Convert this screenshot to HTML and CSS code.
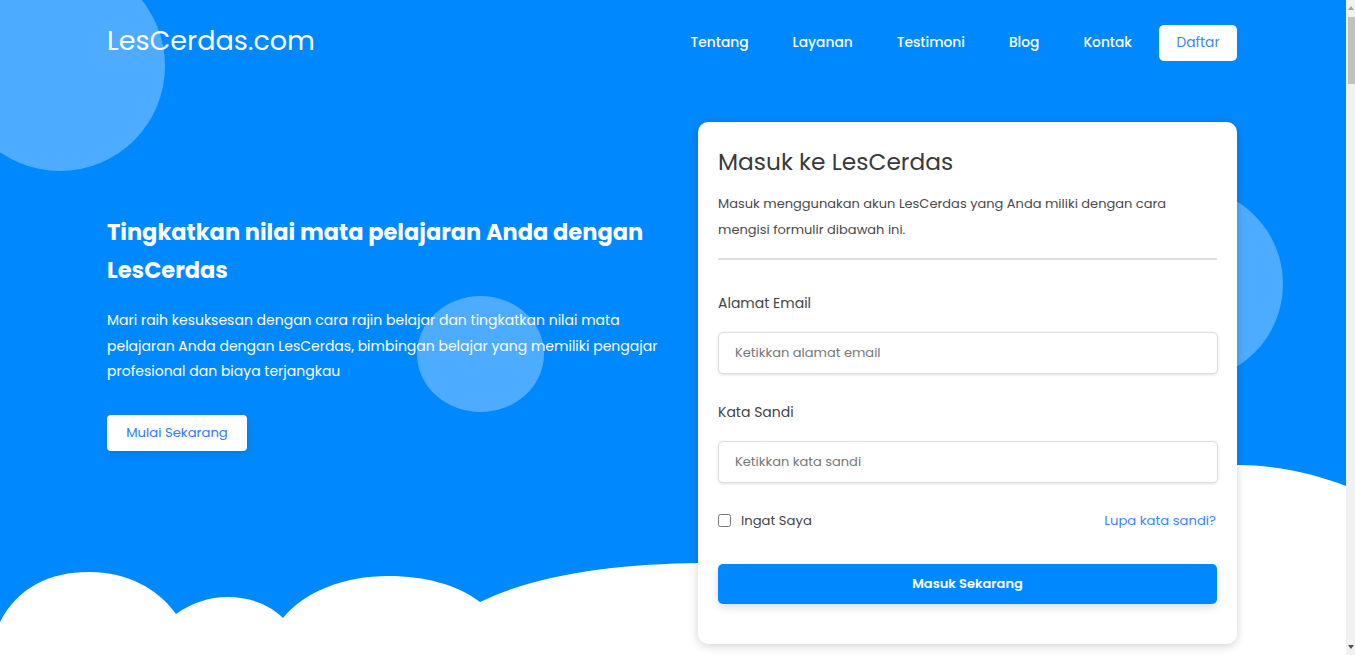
FILE: index.html
```html
<!DOCTYPE html>
<html lang="id">
<head>
<meta charset="utf-8">
<title>LesCerdas.com</title>
<link rel="stylesheet" href="styles.css">
</head>
<body>
<section class="hero">
  <span class="bubble bubble-tl"></span>
  <span class="bubble bubble-mid"></span>
  <span class="bubble bubble-r"></span>
  <svg class="clouds" viewBox="0 0 1346 200" preserveAspectRatio="none" aria-hidden="true">
    <path d="M0,167 C18,132 50,117 89,117 C128,117 158,134 176,159 C192,148 208,142 228,142 C250,142 270,150 283,163 C305,136 345,121 388,121 C425,121 458,130 480,147 C540,118 620,109 700,108 C900,60 1100,12 1237,10 C1280,10 1318,20 1346,31 L1346,200 L0,200 Z" fill="#ffffff"/>
  </svg>
  <div class="container">
    <header class="nav">
      <a class="logo" href="#">LesCerdas.com</a>
      <nav class="menu">
        <a href="#tentang">Tentang</a>
        <a href="#layanan">Layanan</a>
        <a href="#testimoni">Testimoni</a>
        <a href="#blog">Blog</a>
        <a href="#kontak">Kontak</a>
        <a class="btn-daftar" href="#">Daftar</a>
      </nav>
    </header>
    <div class="hero-grid">
      <div class="hero-text">
        <h1>Tingkatkan nilai mata pelajaran Anda dengan LesCerdas</h1>
        <p>Mari raih kesuksesan dengan cara rajin belajar dan tingkatkan nilai mata pelajaran Anda dengan LesCerdas, bimbingan belajar yang memiliki pengajar profesional dan biaya terjangkau</p>
        <a class="btn-mulai" href="#">Mulai Sekarang</a>
      </div>
      <form class="card">
        <h2>Masuk ke LesCerdas</h2>
        <p class="card-desc">Masuk menggunakan akun LesCerdas yang Anda miliki dengan cara mengisi formulir dibawah ini.</p>
        <hr class="divider">
        <label class="field-label" for="email">Alamat Email</label>
        <input class="field" id="email" type="email" placeholder="Ketikkan alamat email">
        <label class="field-label" for="pass">Kata Sandi</label>
        <input class="field" id="pass" type="password" placeholder="Ketikkan kata sandi">
        <div class="row">
          <label class="remember"><input type="checkbox"> Ingat Saya</label>
          <a class="forgot" href="#">Lupa kata sandi?</a>
        </div>
        <button class="btn-submit" type="button">Masuk Sekarang</button>
      </form>
    </div>
  </div>
</section>
<div class="scrollbar" aria-hidden="true">
  <span class="sb-arrow sb-up"></span>
  <span class="sb-thumb"></span>
  <span class="sb-arrow sb-down"></span>
</div>
</body>
</html>
```
FILE: styles.css
```css
* { box-sizing: border-box; }
body {
  margin: 0;
  padding-right: 9px;
  font-family: "Poppins", Inter, "Noto Sans", sans-serif;
  color: #333;
  background: #fff;
}
a { text-decoration: none; }
.container {
  max-width: 1132px;
  margin: 0 auto;
  padding-right: 2px;
  position: relative;
}
.hero {
  position: relative;
  height: 655px;
  background: #0089ff;
  overflow: hidden;
}
.bubble {
  position: absolute;
  border-radius: 50%;
  background: rgba(255, 255, 255, 0.3);
}
.bubble-tl { left: -45px; top: -39px; width: 210px; height: 210px; }
.bubble-mid { left: 417px; top: 296px; width: 127px; height: 116px; }
.bubble-r { left: 1089px; top: 187px; width: 194px; height: 194px; }
.clouds {
  position: absolute;
  left: 0;
  bottom: 0;
  width: 100%;
  height: 200px;
}
.nav {
  display: flex;
  align-items: center;
  justify-content: space-between;
  padding-top: 25px;
}
.logo {
  color: #fff;
  font-size: 27px;
  font-weight: 400;
  margin-top: -4px;
}
.menu {
  display: flex;
  align-items: center;
}
.menu a {
  color: #fff;
  font-size: 13.8px;
  font-weight: 500;
  padding: 0 22px;
}
.menu a.btn-daftar {
  margin-left: 5px;
  background: #fff;
  color: #3b86f7;
  font-weight: 400;
  height: 36px;
  line-height: 36px;
  width: 78px;
  padding: 0;
  text-align: center;
  border-radius: 5px;
}
.hero-grid {
  display: grid;
  grid-template-columns: 1fr 539px;
  gap: 33px;
  margin-top: 61px;
}
.hero-text { padding-top: 91px; }
.hero-text h1 {
  margin: 0;
  color: #fff;
  font-size: 22.5px;
  font-weight: 700;
  line-height: 38px;
}
.hero-text p {
  margin: 19px 0 0;
  color: #fff;
  font-size: 14px;
  line-height: 25.5px;
}
.btn-mulai {
  display: inline-block;
  margin-top: 30px;
  width: 140px;
  height: 36px;
  line-height: 36px;
  text-align: center;
  background: #fff;
  color: #2e7cf6;
  font-size: 13.2px;
  border-radius: 4px;
  box-shadow: 0 3px 8px rgba(0, 0, 0, 0.12);
}
.card {
  background: #fff;
  border-radius: 10px;
  padding: 24px 20px 40px;
  box-shadow: 0 2px 10px rgba(0, 0, 0, 0.18);
  display: flex;
  flex-direction: column;
  position: relative;
  z-index: 1;
}
.card h2 {
  margin: 0;
  font-size: 23.3px;
  font-weight: 400;
  line-height: 32px;
  color: #3a3a3a;
}
.card-desc {
  margin: 13px 0 0;
  font-size: 13px;
  line-height: 26px;
  color: #4a4a4a;
}
.divider {
  margin: 15px 0 0;
  border: 0;
  height: 2px;
  background: #dcdcdc;
}
.field-label {
  font-size: 14px;
  line-height: 21px;
  color: #444;
  margin-top: 33px;
}
.field-label + .field { margin-top: 18px; }
.field + .field-label { margin-top: 28px; }
.field {
  height: 42px;
  border: 1px solid #dedede;
  border-radius: 5px;
  padding: 0 16px;
  font-family: inherit;
  font-size: 13px;
  color: #333;
  box-shadow: 0 1px 3px rgba(0, 0, 0, 0.12);
  width: 500px;
}
.field::placeholder { color: #777; }
.row {
  margin-top: 27px;
  display: flex;
  justify-content: space-between;
  align-items: center;
  line-height: 21px;
  padding-right: 1px;
}
.remember {
  display: flex;
  align-items: center;
  font-size: 13.2px;
  color: #444;
}
.remember input {
  margin: 0 10px 0 0;
  width: 13px;
  height: 13px;
}
.forgot {
  color: #3b86f7;
  font-size: 13.2px;
}
.btn-submit {
  margin-top: 33px;
  height: 40px;
  border: 0;
  border-radius: 5px;
  background: #0089ff;
  color: #fff;
  font-family: inherit;
  font-size: 13px;
  font-weight: 600;
  box-shadow: 0 3px 8px rgba(0, 0, 0, 0.15);
}
.scrollbar {
  position: fixed;
  top: 0;
  right: 0;
  width: 9px;
  height: 100vh;
  background: #f1f1f1;
}
.sb-thumb {
  position: absolute;
  top: 17px;
  left: 2px;
  right: 0;
  height: 67px;
  background: #c1c1c1;
}
.sb-arrow {
  position: absolute;
  left: 2px;
  width: 0;
  height: 0;
  border-left: 3.5px solid transparent;
  border-right: 3.5px solid transparent;
}
.sb-up { top: 6px; border-bottom: 4px solid #a3a3a3; }
.sb-down { bottom: 6px; border-top: 4px solid #505050; }
```
